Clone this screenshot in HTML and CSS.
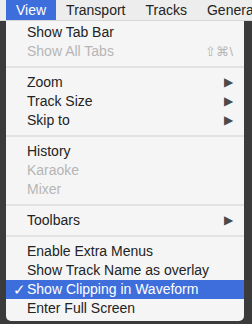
FILE: index.html
```html
<!DOCTYPE html>
<html lang="en">

<head>
    <meta charset="UTF-8">
    <title>View menu</title>
    <link rel="stylesheet" href="styles.css">
</head>

<body>
    <nav class="menubar">
        <div class="title active">View</div>
        <div class="title">Transport</div>
        <div class="title">Tracks</div>
        <div class="title">General</div>
    </nav>
    <ul class="menu">
        <li class="item">Show Tab Bar</li>
        <li class="item disabled">Show All Tabs<span class="key">⇧⌘\</span></li>
        <li class="sep"></li>
        <li class="item">Zoom<span class="arrow">▶</span></li>
        <li class="item">Track Size<span class="arrow">▶</span></li>
        <li class="item">Skip to<span class="arrow">▶</span></li>
        <li class="sep"></li>
        <li class="item">History</li>
        <li class="item disabled">Karaoke</li>
        <li class="item disabled">Mixer</li>
        <li class="sep"></li>
        <li class="item">Toolbars<span class="arrow">▶</span></li>
        <li class="sep"></li>
        <li class="item">Enable Extra Menus</li>
        <li class="item">Show Track Name as overlay</li>
        <li class="item selected"><span class="check">✓</span>Show Clipping in Waveform</li>
        <li class="item">Enter Full Screen</li>
    </ul>
</body>

</html>
```

FILE: styles.css
```css
html,
body {
    margin: 0;
    height: 100%;
    overflow: hidden;
}

body {
    background: #3b3b3b;
    font-family: "Liberation Sans", Arial, sans-serif;
    font-size: 14px;
    color: #232323;
}

.menubar {
    display: flex;
    height: 20px;
    padding-left: 6px;
    background: #ededed;
    border-bottom: 1px solid #d6d6d6;
    white-space: nowrap;
    overflow: hidden;
}

.title {
    padding: 0 10px;
    line-height: 20px;
}

.title.active {
    background: #3e6edb;
    color: #fff;
}

.menu {
    list-style: none;
    margin: 0 0 0 6px;
    padding: 2px 0 3px;
    width: 238px;
    background: #f5f5f5;
    border-radius: 0 0 5px 5px;
}

.item {
    position: relative;
    display: flex;
    height: 19px;
    line-height: 19px;
    padding: 0 11px 0 21px;
    white-space: nowrap;
}

.item.disabled {
    color: #b5b5b5;
}

.item.selected {
    background: #3e6edb;
    color: #fff;
}

.check {
    position: absolute;
    left: 7px;
    top: 0;
    font-size: 15px;
}

.key {
    margin-left: auto;
    font-size: 13px;
}

.arrow {
    margin-left: auto;
    font-size: 12px;
    color: #4a4a4a;
}

.sep {
    height: 2px;
    margin: 5px 0;
    background: #e3e3e3;
}
```
